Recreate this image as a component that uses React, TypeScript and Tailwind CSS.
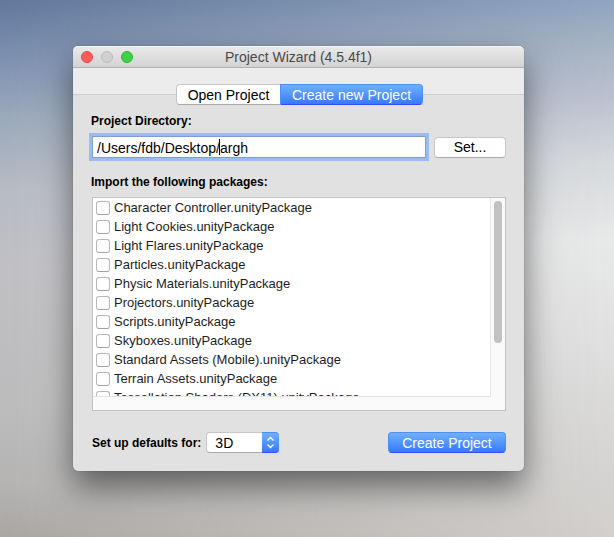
import { useState } from "react";

const packages = [
  "Character Controller.unityPackage",
  "Light Cookies.unityPackage",
  "Light Flares.unityPackage",
  "Particles.unityPackage",
  "Physic Materials.unityPackage",
  "Projectors.unityPackage",
  "Scripts.unityPackage",
  "Skyboxes.unityPackage",
  "Standard Assets (Mobile).unityPackage",
  "Terrain Assets.unityPackage",
  "Tessellation Shaders (DX11).unityPackage",
];

const blueFill =
  "border border-[#4a90fb] border-b-[#2f4ffb] bg-linear-to-b from-[#70b0fc] to-[#3a77fd] text-white";
const whiteFill = "border border-[#c6c6c6] border-b-[#a9a9a9] bg-white text-black";

function TitleBar() {
  return (
    <header className="relative flex h-[22px] items-center justify-center rounded-t-[5px] border-t border-b border-t-[#f6f6f6] border-b-[#b2b2b2] bg-linear-to-b from-[#e9e9e9] to-[#d3d3d3]">
      <div className="absolute left-2 flex gap-2">
        <button aria-label="Close" className="size-3 rounded-full border border-[#e2484b] bg-[#fc5b5e]" />
        <button aria-label="Minimize" className="size-3 rounded-full border border-[#bdbdbd] bg-[#d0d0d0]" />
        <button aria-label="Zoom" className="size-3 rounded-full border border-[#2fb335] bg-[#3fd146]" />
      </div>
      <h1 className="text-[14px] leading-4 text-[#4a4a4a]">Project Wizard (4.5.4f1)</h1>
    </header>
  );
}

function Tabs() {
  return (
    <div className="relative flex h-[43px] justify-center pt-4 pl-0.5">
      <div className="absolute inset-x-0 top-0 h-[27px] border-b border-[#cdcdcd] bg-[#ececec]" />
      <div role="tablist" className="relative flex h-[21px] text-[14px] leading-4">
        <button role="tab" aria-selected={false} className={`w-[104px] rounded-l-[4px] border-r-0 ${whiteFill}`}>
          Open Project
        </button>
        <button role="tab" aria-selected className={`w-[143px] rounded-r-[4px] ${blueFill}`}>
          Create new Project
        </button>
      </div>
    </div>
  );
}

function PackageList() {
  return (
    <div className="border border-[#c3c3c3] bg-[#fafafa] pb-[13px]">
      <div className="flex h-[199px]">
        <ul className="flex-1 overflow-hidden border-r border-b border-[#e6e6e6] bg-white">
          {packages.map((name) => (
            <li key={name} className="h-[19px] pl-[3px]">
              <label className="flex h-[19px] items-center gap-1 pt-px text-[13px] leading-4 text-[#1e1e1e]">
                <input
                  type="checkbox"
                  className="size-[14px] appearance-none rounded-[3px] border border-[#b8b8b8] border-b-[#a4a4a4] bg-white"
                />
                {name}
              </label>
            </li>
          ))}
        </ul>
        <div className="w-[14px] px-[3px] pt-[3px]">
          <div className="h-[142px] w-2 rounded-full bg-[#c1c1c1]" />
        </div>
      </div>
    </div>
  );
}

export default function App() {
  const [path, setPath] = useState("/Users/fdb/Desktop/argh");
  return (
    <main className="relative min-h-screen bg-[linear-gradient(to_bottom,#62789c_0%,#8093b2_12%,#9ba9bb_22%,#b7bbc3_35%,#c0c0c4_50%,#bcbcbd_75%,#b5b4b3_90%,#aaa6a2_100%)] pt-[46px] pr-[90px] pb-[66px] pl-[73px] font-['Liberation_Sans',Arial,sans-serif] before:absolute before:inset-0 before:bg-[linear-gradient(to_bottom,#8fa5c1_0%,#a6b3c3_8%,#b9bfcd_17%,#d6d9dc_30%,#e8e9e9_45%,#e2e2e2_60%,#d8d7d6_80%,#d2cfcc_100%)] before:[mask-image:linear-gradient(to_right,transparent,black)]">
      <section className="relative rounded-[5px] bg-[#e1e1e1] shadow-[0_0_1px_rgba(0,0,0,0.5),0_16px_32px_rgba(0,0,0,0.5)]">
        <TitleBar />
        <Tabs />
        <form className="pr-[18px] pb-[18px] pl-[19px]" onSubmit={(e) => e.preventDefault()}>
          <label htmlFor="directory" className="-ml-px block text-[12px] leading-5 font-bold">
            Project Directory:
          </label>
          <div className="mt-[5px] flex items-center gap-2">
            <div className="relative flex-1">
              <input
                id="directory"
                value={path}
                onChange={(e) => setPath(e.target.value)}
                className="block h-[22px] w-full border border-[#7f9fd4] bg-white px-1 pt-[2px] text-[14px] leading-4 text-black ring-3 ring-[#9cbbee] outline-none"
              />
              <span className="absolute top-[3px] left-[127px] h-4 w-px bg-black" />
            </div>
            <button type="button" className={`h-[21px] w-[72px] rounded-[4px] text-[14px] leading-4 ${whiteFill}`}>
              Set...
            </button>
          </div>
          <h2 className="mt-[14px] mb-[5px] -ml-px text-[12px] leading-5 font-bold">Import the following packages:</h2>
          <PackageList />
          <div className="mt-[21px] flex items-center">
            <label htmlFor="defaults" className="text-[12px] leading-5 font-bold">
              Set up defaults for:
            </label>
            <div className="relative ml-[5px] h-[21px] w-[73px]">
              <select
                id="defaults"
                className={`block h-[21px] w-full appearance-none rounded-[4px] pl-2 text-[14px] leading-4 ${whiteFill}`}
              >
                <option>3D</option>
                <option>2D</option>
              </select>
              <span
                className={`pointer-events-none absolute inset-y-0 right-0 flex w-[17px] items-center justify-center rounded-r-[4px] border-x-0 ${blueFill}`}
              >
                <svg width="9" height="13" viewBox="0 0 9 13" fill="none" stroke="currentColor" strokeWidth="1.4">
                  <path d="M1.5 4.5 4.5 1.5l3 3M1.5 8.5l3 3 3-3" />
                </svg>
              </span>
            </div>
            <button type="submit" className={`ml-auto h-[21px] w-[118px] rounded-[4px] text-[14px] leading-4 ${blueFill}`}>
              Create Project
            </button>
          </div>
        </form>
      </section>
    </main>
  );
}
